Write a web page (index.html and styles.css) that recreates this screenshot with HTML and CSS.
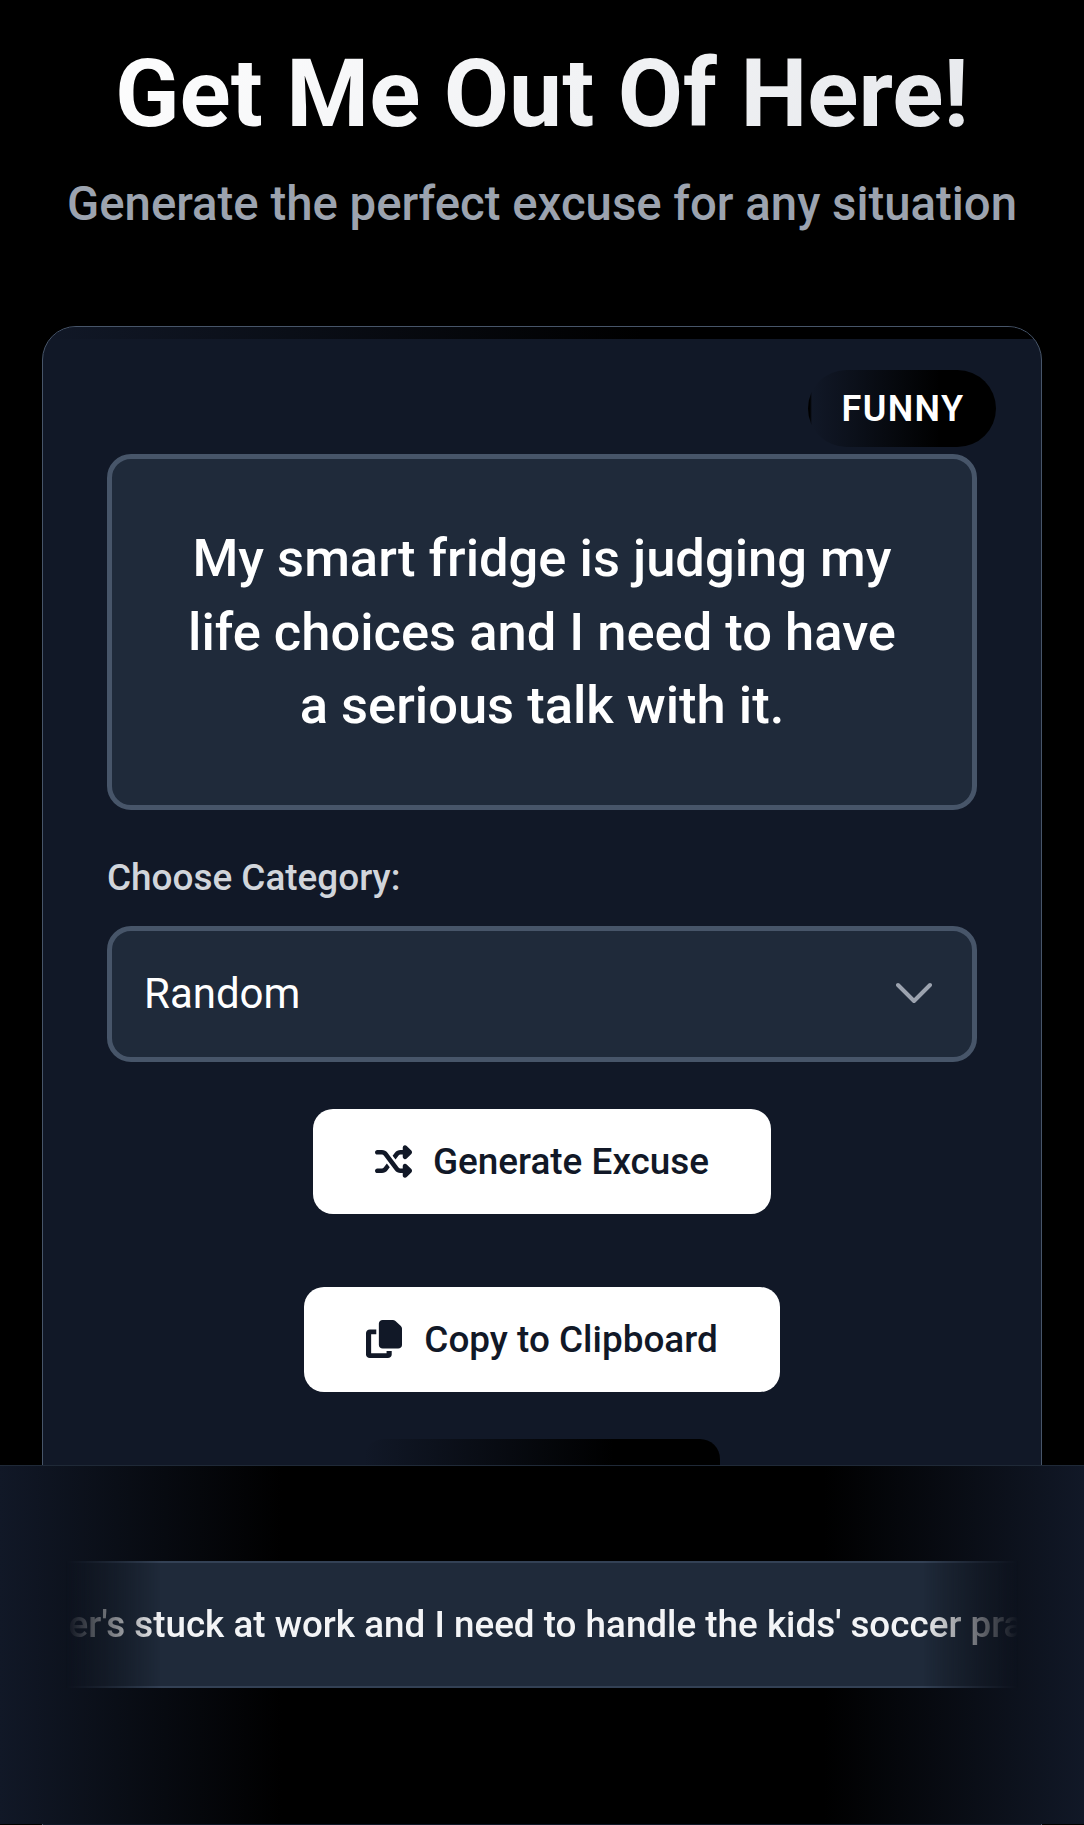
FILE: index.html
```html
<!DOCTYPE html>
<html lang="en">
<head>
<meta charset="utf-8">
<title>Get Me Out Of Here!</title>
<link rel="stylesheet" href="styles.css">
</head>
<body>
<div class="page">
  <header class="header">
    <h1 class="title">Get Me Out Of Here!</h1>
    <p class="subtitle">Generate the perfect excuse for any situation</p>
  </header>
  <main class="card">
    <span class="badge">FUNNY</span>
    <div class="excuse">My smart fridge is judging my life choices and I need to have a serious talk with it.</div>
    <label class="label">Choose Category:</label>
    <div class="select">
      <span>Random</span>
      <svg class="chevron" viewBox="0 0 36 22" aria-hidden="true"><path d="M2 3l16 16L34 3" fill="none" stroke="#9ca3af" stroke-width="4" stroke-linecap="round" stroke-linejoin="round"/></svg>
    </div>
    <div class="actions">
      <button class="btn btn-generate" type="button">
        <svg class="icon" viewBox="0 0 512 512" aria-hidden="true"><path d="M403.8 34.4c12-5 25.7-2.2 34.9 6.9l64 64c6 6 9.4 14.1 9.4 22.6s-3.4 16.6-9.4 22.6l-64 64c-9.2 9.2-22.9 11.9-34.9 6.9s-19.8-16.6-19.8-29.6V160H352c-10.1 0-19.6 4.7-25.6 12.8L284 229.3 244 176l31.2-41.6C293.3 110.2 321.8 96 352 96h32V64c0-12.9 7.8-24.6 19.8-29.6zM164 282.7L204 336l-31.2 41.6C154.7 401.8 126.2 416 96 416H32c-17.7 0-32-14.3-32-32s14.3-32 32-32H96c10.1 0 19.6-4.7 25.6-12.8L164 282.7zm274.6 188c-9.2 9.2-22.9 11.9-34.9 6.9s-19.8-16.6-19.8-29.6V416H352c-30.2 0-58.7-14.2-76.8-38.4L121.6 172.8c-6-8.1-15.5-12.8-25.6-12.8H32c-17.7 0-32-14.3-32-32s14.3-32 32-32H96c30.2 0 58.7 14.2 76.8 38.4L326.4 339.2c6 8.1 15.5 12.8 25.6 12.8h32V320c0-12.9 7.8-24.6 19.8-29.6s25.7-2.2 34.9 6.9l64 64c6 6 9.4 14.1 9.4 22.6s-3.4 16.6-9.4 22.6l-64 64z"/></svg>
        Generate Excuse
      </button>
      <button class="btn btn-copy" type="button">
        <svg class="icon icon-copy" viewBox="0 0 448 512" preserveAspectRatio="none" aria-hidden="true"><path d="M208 0H332.1c12.7 0 24.9 5.1 33.9 14.1l67.9 67.9c9 9 14.1 21.2 14.1 33.9V336c0 26.5-21.5 48-48 48H208c-26.5 0-48-21.5-48-48V48c0-26.5 21.5-48 48-48zM48 128h80v64H64V448H256V416h64v48c0 26.5-21.5 48-48 48H48c-26.5 0-48-21.5-48-48V176c0-26.5 21.5-48 48-48z"/></svg>
        Copy to Clipboard
      </button>
      <div class="btn-hidden"></div>
    </div>
  </main>
  <footer class="ticker-band">
    <div class="ticker">
      <div class="ticker-text">My partner's stuck at work and I need to handle the kids' soccer practice.</div>
    </div>
  </footer>
</div>
</body>
</html>
```

FILE: styles.css
```css
* { box-sizing: border-box; }
html, body { margin: 0; padding: 0; background: #000; }
body { font-family: Roboto, "Liberation Sans", sans-serif; }
.page { position: relative; height: 1825px; overflow: hidden; padding: 0 42px; }
.header { text-align: center; padding-top: 39px; height: 326px; }
.title {
  margin: 0;
  font-size: 94.7px;
  line-height: 110px;
  font-weight: 700;
  background: linear-gradient(135deg, #ffffff, #e5e7eb);
  -webkit-background-clip: text;
  background-clip: text;
  color: transparent;
}
.subtitle {
  margin: 27px 0 0;
  font-size: 47.3px;
  line-height: 56px;
  font-weight: 500;
  color: #9ca3af;
}
.card {
  position: relative;
  height: 1600px;
  padding: 127px 64px 0;
  background: #111827;
  border: 1px solid #475569;
  border-radius: 34px;
  overflow: hidden;
}
.card::before {
  content: "";
  position: absolute;
  top: 0; left: 0; right: 0;
  height: 12px;
  background: linear-gradient(90deg, #111827, #000 60%);
}
.badge {
  position: absolute;
  top: 43px; right: 45px;
  width: 188px; height: 77px;
  border-radius: 39px;
  display: flex; align-items: center; justify-content: center;
  padding-left: 2px;
  font-size: 36px;
  font-weight: 600;
  letter-spacing: 1.4px;
  color: #fff;
  background: linear-gradient(90deg, #000 0, #000 2px, #111827 4px, #000 70%);
}
.excuse {
  height: 356px;
  padding: 63px 66px 0;
  border: 5px solid #475569;
  border-radius: 24px;
  background: #1f2a3a;
  color: #fff;
  text-align: center;
  font-size: 52.5px;
  line-height: 73.5px;
  font-weight: 500;
}
.label {
  display: block;
  margin-top: 44px;
  font-size: 36.9px;
  line-height: 48px;
  font-weight: 500;
  color: #d1d5db;
}
.select {
  margin-top: 24px;
  height: 136px;
  padding: 0 40px 2px 32px;
  border: 5px solid #475569;
  border-radius: 24px;
  background: #1f2a3a;
  color: #fff;
  font-size: 42px;
  display: flex; align-items: center; justify-content: space-between;
}
.chevron { width: 36px; height: 22px; }
.actions { display: flex; flex-direction: column; align-items: center; margin-top: 47px; }
.btn {
  display: flex; align-items: center; gap: 21px;
  height: 105px;
  padding: 0 62px;
  border: 0;
  border-radius: 20px;
  background: #fff;
  color: #111827;
  font-family: inherit;
  font-size: 36.9px;
  font-weight: 500;
}
.btn-copy { margin-top: 73px; gap: 22px; }
.icon { width: 37px; height: 37px; fill: #111827; }
.icon-copy { height: 38px; width: 36px; margin-top: -2px; }
.btn-hidden {
  margin-top: 47px;
  width: 356px; height: 105px;
  border-radius: 20px;
  background: linear-gradient(90deg, #111827, #000 70%);
}
.ticker-band {
  position: absolute;
  left: 0; right: 0; bottom: 1px;
  height: 359px;
  padding: 95px 66px 0;
  border-top: 1px solid #1f2937;
  background: linear-gradient(90deg, #111827 0%, #000 26%, #000 76%, #111827 100%);
}
.ticker {
  height: 127px;
  display: flex; align-items: center;
  overflow: hidden;
  border-top: 2px solid #334155;
  border-bottom: 2px solid #334155;
  background: #1f2a3a;
  -webkit-mask-image: linear-gradient(90deg, transparent, #000 10%, #000 90%, transparent);
  mask-image: linear-gradient(90deg, transparent, #000 10%, #000 90%, transparent);
}
.ticker-text {
  flex: none;
  margin-left: -144px;
  white-space: nowrap;
  font-size: 36.8px;
  font-weight: 500;
  color: #f3f4f6;
}
```
